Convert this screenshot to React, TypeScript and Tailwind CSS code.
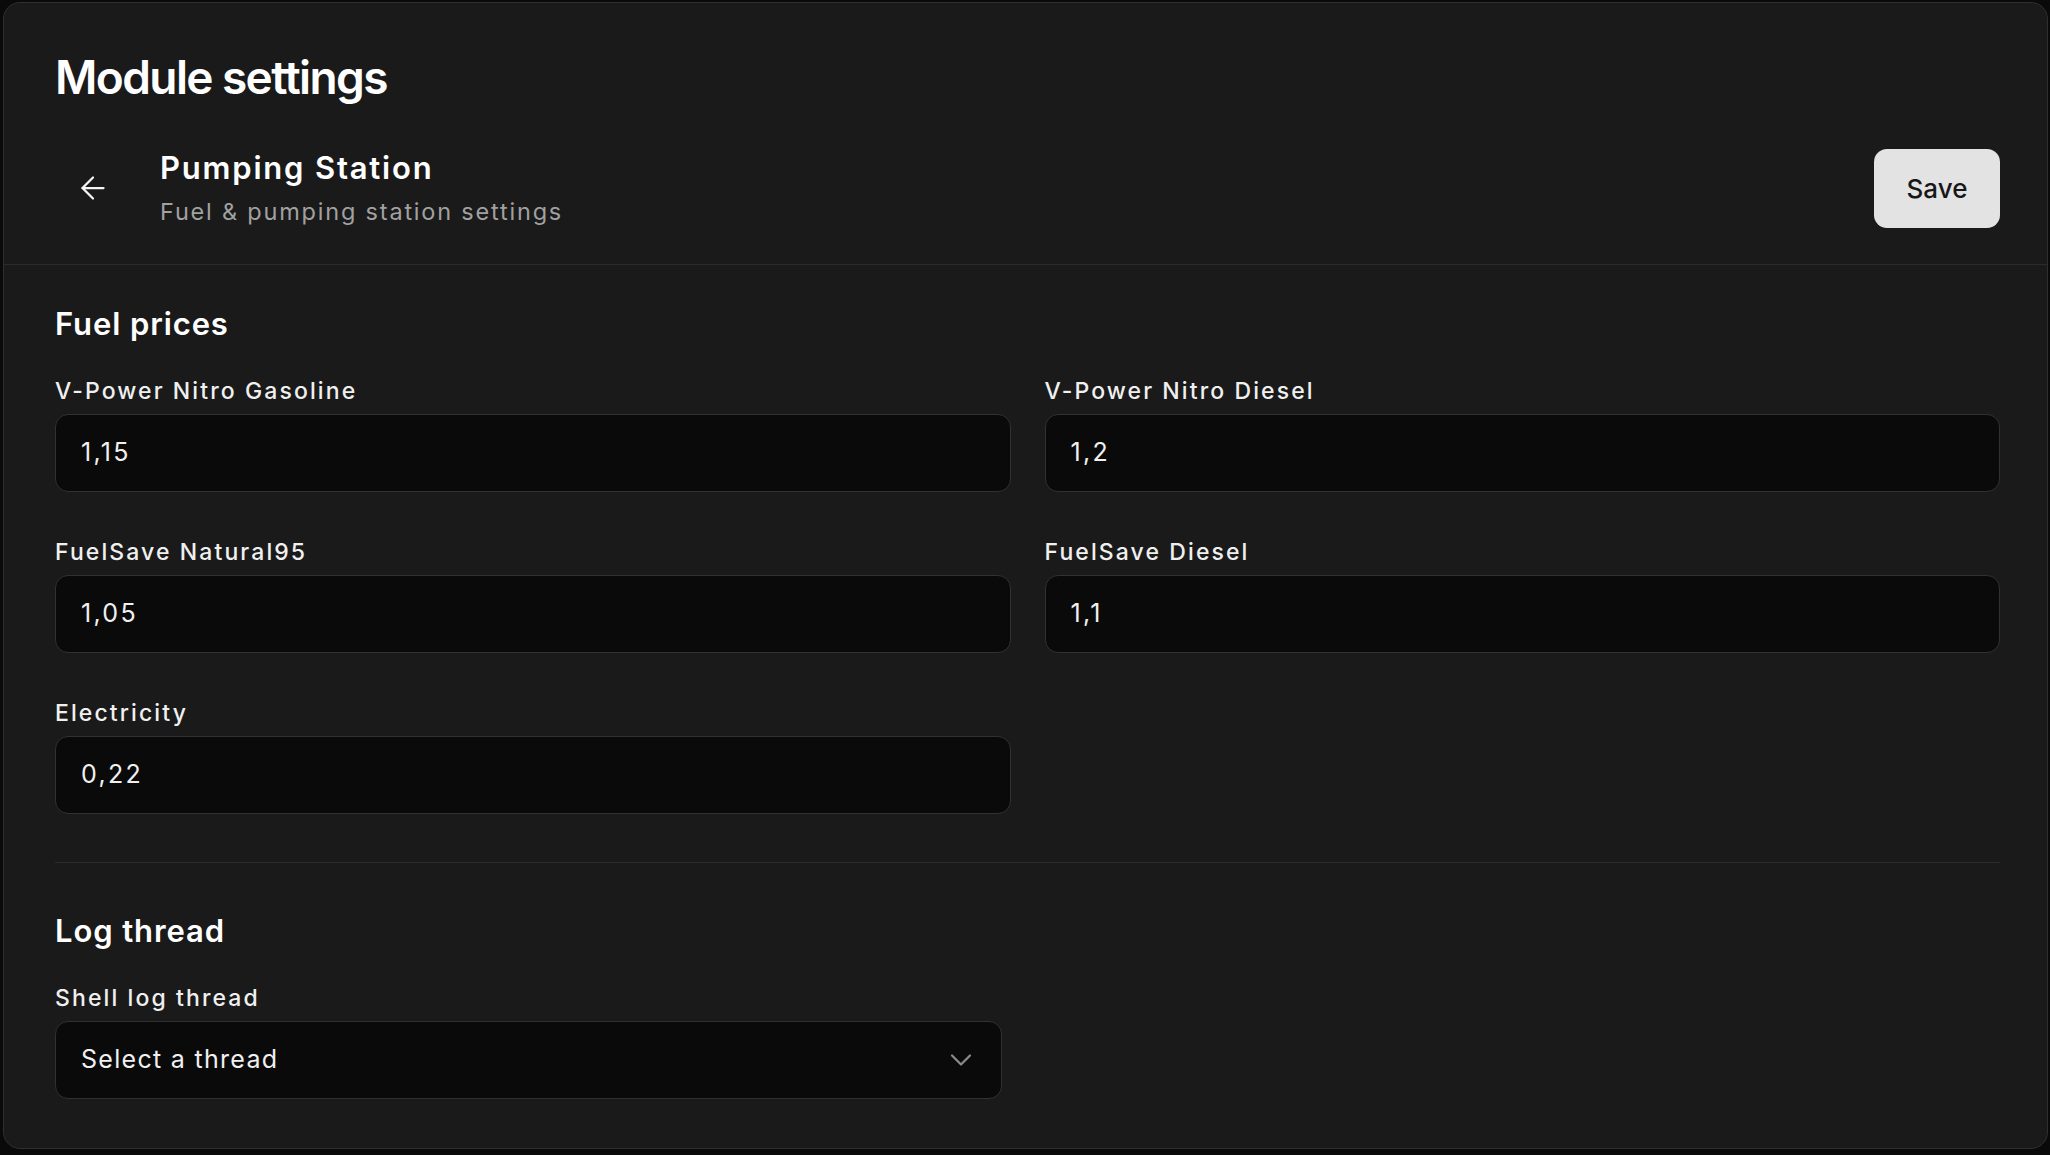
import React from "react";

const font = { fontFamily: 'Inter, "Noto Sans", "Liberation Sans", sans-serif' };

function ArrowLeft() {
  return (
    <svg width="36" height="36" viewBox="0 0 24 24" fill="none" stroke="currentColor" strokeWidth="1.5" strokeLinecap="round" strokeLinejoin="round">
      <path d="m12 19-7-7 7-7" />
      <path d="M19 12H5" />
    </svg>
  );
}

function ChevronDown() {
  return (
    <svg width="36" height="36" viewBox="0 0 24 24" fill="none" stroke="currentColor" strokeWidth="1.5" strokeLinecap="round" strokeLinejoin="round">
      <path d="m6 9 6 6 6-6" />
    </svg>
  );
}

function Field({ label, value }: { label: string; value: string }) {
  return (
    <div className="flex flex-col">
      <label className="text-[23px] leading-[31px] font-medium tracking-[2.1px] text-[#f0f0f0]">{label}</label>
      <div className="mt-[7px] h-[78px] rounded-[13px] border border-[#313131] bg-[#0a0a0a] pl-[25px] flex items-center text-[25px] tracking-[2.3px] text-[#f0f0f0]">
        {value}
      </div>
    </div>
  );
}

export default function App() {
  return (
    <div className="min-h-screen bg-[#0a0a0a] pt-[2px] pl-[3px] pr-[2px]" style={font}>
      <div className="h-[1147px] rounded-[17px] border border-[#2f2f2f] bg-[#1a1a1a] overflow-hidden">
        <div className="pl-[51px] pr-[47px] pt-[47px] pb-[35px] border-b border-[#2b2b2b]">
          <h1 className="text-[46px] leading-[55px] font-semibold tracking-[-1.6px] text-white">Module settings</h1>
          <div className="mt-[42px] flex items-center justify-between">
            <div className="flex items-center">
              <button className="w-[76px] h-[60px] flex items-center justify-center text-[#f5f5f5]">
                <ArrowLeft />
              </button>
              <div className="ml-[29px] flex flex-col">
                <h2 className="text-[31px] leading-[42px] font-semibold tracking-[1.8px] text-white">Pumping Station</h2>
                <p className="mt-[6px] text-[23.5px] leading-[34px] tracking-[1.8px] text-[#a1a1a1]">Fuel &amp; pumping station settings</p>
              </div>
            </div>
            <button className="h-[79px] w-[126px] rounded-[13px] bg-[#e3e3e3] text-[#171717] text-[26px] font-medium">
              Save
            </button>
          </div>
        </div>

        <div className="pl-[51px] pr-[47px] pt-[39px]">
          <h3 className="text-[31px] leading-[40px] font-semibold tracking-[0.9px] text-white">Fuel prices</h3>
          <div className="mt-[32px] grid grid-cols-2 gap-x-[34px] gap-y-[45px]">
            <Field label="V-Power Nitro Gasoline" value="1,15" />
            <Field label="V-Power Nitro Diesel" value="1,2" />
            <Field label="FuelSave Natural95" value="1,05" />
            <Field label="FuelSave Diesel" value="1,1" />
            <Field label="Electricity" value="0,22" />
          </div>

          <div className="mt-[48px] h-px bg-[#2b2b2b]" />

          <h3 className="mt-[48px] text-[31px] leading-[40px] font-semibold tracking-[0.9px] text-white">Log thread</h3>
          <div className="mt-[32px] flex flex-col w-[947px]">
            <label className="text-[23px] leading-[31px] font-medium tracking-[2.1px] text-[#f0f0f0]">Shell log thread</label>
            <div className="mt-[7px] h-[78px] rounded-[13px] border border-[#313131] bg-[#0a0a0a] pl-[25px] pr-[22px] flex items-center justify-between text-[25px] tracking-[1.3px] text-[#f0f0f0]">
              <span>Select a thread</span>
              <span className="text-[#8a8a8a]">
                <ChevronDown />
              </span>
            </div>
          </div>
        </div>
      </div>
    </div>
  );
}
